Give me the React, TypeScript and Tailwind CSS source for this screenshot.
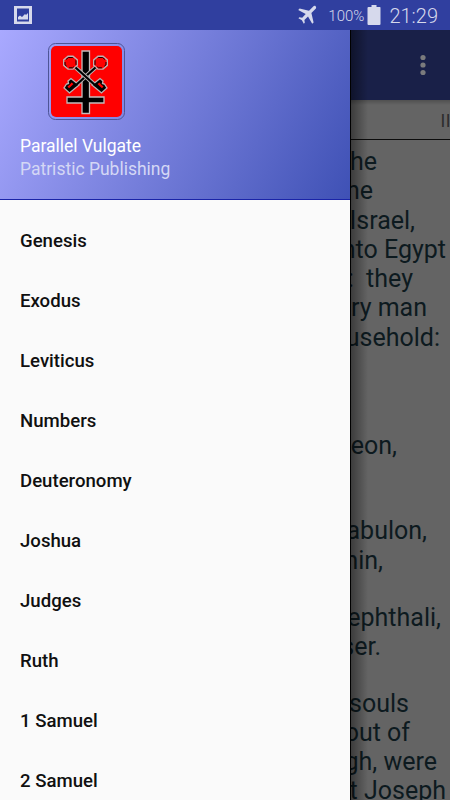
const books = [
  'Genesis',
  'Exodus',
  'Leviticus',
  'Numbers',
  'Deuteronomy',
  'Joshua',
  'Judges',
  'Ruth',
  '1 Samuel',
  '2 Samuel',
];

type Line = { text: string; end: number };

// Visible line endings of the chapter; `end` is the free space right of the line.
const verses: { className: string; lines: Line[] }[] = [
  {
    className: 'mt-[7px]',
    lines: [
      { text: 'the', end: 73 },
      { text: 'the', end: 77 },
      { text: 'Israel,', end: 35 },
      { text: 'into Egypt', end: 4 },
      { text: ':\u00a0 they', end: 37 },
      { text: 'ery man', end: 23 },
      { text: 'ousehold:', end: 10 },
    ],
  },
  { className: 'mt-[79px]', lines: [{ text: 'eon,', end: 53 }] },
  {
    className: 'mt-[56px]',
    lines: [
      { text: 'abulon,', end: 23 },
      { text: 'min,', end: 67 },
    ],
  },
  {
    className: 'mt-[28px]',
    lines: [
      { text: 'ephthali,', end: 9 },
      { text: 'ser.', end: 69 },
    ],
  },
  {
    className: 'mt-[27px]',
    lines: [
      { text: 'souls', end: 41 },
      { text: 'out of', end: 40 },
      { text: 'gh, were', end: 13 },
      { text: 't Joseph', end: 4 },
    ],
  },
];

function StatusBar() {
  return (
    <header className="flex h-[30px] shrink-0 items-center bg-[#303f9f] pl-[14px] pr-[12px] text-[#d6d9ec]">
      <svg width="18" height="20" viewBox="0 0 18 20" className="shrink-0">
        <path fill="#d6d9ec" fillRule="evenodd" d="M0 1h18v18H0zM3 3.500v13h12v-13z" />
        <path fill="#d6d9ec" d="M4 14.500v-2.500l2-1.500 2 1.500 3-3 1 1 2-2v6.500z" />
      </svg>
      <svg width="20" height="20" viewBox="0 0 20 20" className="ml-auto mr-[11px]">
        <path
          fill="currentColor"
          d="M18.6 1.2c.9.9.6 2-.2 2.8l-4 4 2.2 9.4-1.4 1.4-4.2-7.4-3.6 3.5.4 2.8-1 1-1.9-3.5L1.4 13.300l1-1 2.8.4 3.500-3.600L1.200 4.900l1.400-1.400L12 5.700l4-4c.8-.8 1.800-1.300 2.600-.5z"
        />
      </svg>
      <span className="mt-[2px] text-[15px] leading-none font-light">100%</span>
      <svg width="14" height="20" viewBox="0 0 14 20" className="ml-[3px] mr-[8px]">
        <path fill="currentColor" d="M4.500 0h5v2H13q.5 0 .5 1v16q0 1-1 1H1.500q-1 0-1-1V3q0-1 1-1h3z" />
      </svg>
      <span className="mt-[2px] text-[20px] leading-none font-light">21:29</span>
    </header>
  );
}

// Crossed keys over an inverted cross
function AppLogo() {
  return (
    <svg width="78" height="78" viewBox="0 0 78 78" className="ml-[28px] block">
      <rect x=".5" y=".5" width="76" height="76" rx="7" fill="none" stroke="#4d5596" />
      <rect x="3" y="3" width="71" height="71" rx="5" fill="#f00" />
      <path
        d="M34 8h7.500v46H56v6H41.500v10.500H34V60H19v-6h15z"
        fill="#000"
        stroke="#c4bcbc"
        strokeWidth="1.300"
      />
      {['matrix(-1 0 0 1 75 0)', 'matrix(1 0 0 1 0 0)'].map((transform) => (
        <g key={transform} transform={transform} fill="none">
          <path d="m20 13.200h5l4.300 3.700v5.500l-4.300 3.700h-5l-4.300-3.700v-5.500z" stroke="#bdb0b0" strokeWidth="1.400" />
          <path
            d="m20.500 14.500h4l3.500 3v4.500l-3.500 2.800h-4l-3.500-3v-4.500z"
            stroke="#100"
            strokeWidth="1"
            strokeDasharray="5 3"
          />
          <path d="M27.500 24.500 47 42" stroke="#bdb5b5" strokeWidth="4.200" />
          <path
            d="m44 42 8-6.500 3 2.500-.5 2.500 2 .5 2.500 4-5.500 5z"
            fill="#000"
            stroke="#bdb5b5"
            strokeWidth="1.300"
          />
          <path d="m49.500 41 2-1.500 1.500 2 2.500 2-1.500 1.800z" fill="#f00" />
          <path d="M27.500 24.500 48 43" stroke="#000" strokeWidth="2.300" />
        </g>
      ))}
    </svg>
  );
}

function Drawer() {
  return (
    <aside className="flex w-[350px] shrink-0 flex-col overflow-hidden bg-[#fafafa]">
      <div className="h-[170px] shrink-0 border-b border-[#1a24a8] bg-[linear-gradient(115.9deg,#a9a9ff,#3f51b5)] px-5 pt-[13px]">
        <AppLogo />
        <p className="mt-[13px] text-[17.5px] leading-6 text-white">Parallel Vulgate</p>
        <p className="text-[17.5px] leading-[23px] text-[#d4d7f5]">Patristic Publishing</p>
      </div>
      <nav className="pt-[12px]">
        {books.map((book) => (
          <a
            key={book}
            className="flex h-[60px] items-center px-5 text-[18.6px] font-medium text-[#101010]"
          >
            {book}
          </a>
        ))}
      </nav>
    </aside>
  );
}

function Reader() {
  return (
    <main className="relative flex min-w-0 flex-1 flex-col overflow-hidden bg-[#646464] text-[#0d1a1f]">
      <div className="flex h-[70px] shrink-0 items-center justify-end bg-[#192048] pr-[24px]">
        <svg width="6" height="22" viewBox="0 0 6 22" fill="#7b7b7d">
          <circle cx="3" cy="3.500" r="2.600" />
          <circle cx="3" cy="11" r="2.600" />
          <circle cx="3" cy="18.500" r="2.600" />
        </svg>
      </div>
      <div className="flex h-[40px] shrink-0 items-center justify-end overflow-hidden border-b border-[#0c0c0c] bg-[linear-gradient(#505050,#646464_5px)] pt-[4px] text-[17.5px] tracking-[0.5px] text-[#2c2c2c]">
        <span className="-mr-px">II</span>
      </div>
      {verses.map(({ className, lines }) => (
        <div key={lines[0].text} className={className}>
          {lines.map(({ text, end }) => (
            <p
              key={text + end}
              className="flex justify-end whitespace-nowrap text-[25px] leading-[29.3px]"
              style={{ paddingRight: end }}
            >
              {text}
            </p>
          ))}
        </div>
      ))}
      <div className="absolute inset-y-0 left-0 w-[18px] border-l border-black bg-linear-to-r from-black/40 to-transparent" />
    </main>
  );
}

export default function App() {
  return (
    <div className="flex h-[800px] w-[450px] flex-col overflow-hidden font-['Roboto',sans-serif]">
      <StatusBar />
      <div className="flex min-h-0 flex-1">
        <Drawer />
        <Reader />
      </div>
    </div>
  );
}
